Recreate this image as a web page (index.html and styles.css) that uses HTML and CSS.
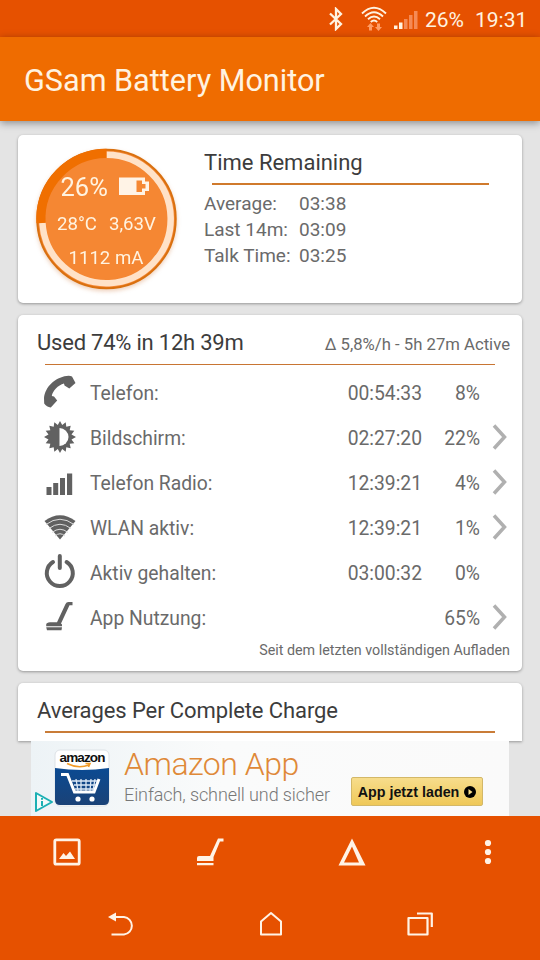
FILE: index.html
```html
<!DOCTYPE html>
<html lang="de">
<head>
  <meta charset="UTF-8" />
  <meta name="viewport" content="width=device-width, initial-scale=1.0"/>
  <title>GSam Battery Monitor</title>
  <link rel="stylesheet" href="styles.css">
</head>
<body>

<div class="status-bar">
  <svg class="bluetooth" width="14" height="24" viewBox="0 0 14 24">
    <path d="M1 6.500L12 17L7 22V2L12 7L1 17.500" fill="none" stroke="#fff3e0" stroke-width="2.300"/>
  </svg>
  <svg class="wifi" width="26" height="26" viewBox="0 0 26 26">
    <g fill="none" stroke="#fff3e0" stroke-width="1.900">
      <path d="M1 7.500Q13 -4 25 7.500"/>
      <path d="M4 10.500Q13 2 22 10.500"/>
      <path d="M7 13.300Q13 7.700 19 13.300"/>
      <path d="M9.800 16Q13 13 16.200 16"/>
    </g>
    <path d="M9.500 17L13 21H11V24.500H8V21H6ZM17.500 25L14 21H16V17.500H19V21H21Z" fill="#ff9d66"/>
  </svg>
  <svg class="signal" width="24" height="18" viewBox="0 0 24 18">
    <path d="M0 14.500H3.500V18H0ZM5 11.500H8.500V18H5Z" fill="#fff3e0"/>
    <path d="M10 8H13.500V18H10ZM15 4H18.500V18H15ZM20 0H23.500V18H20Z" fill="#f58a55"/>
  </svg>
  <span class="status-battery">26%</span>
  <span class="clock">19:31</span>
</div>

<header class="app-bar">
  <h1>GSam Battery Monitor</h1>
</header>

<main class="content">
  <section class="card summary">
    <svg class="gauge" width="146" height="146" viewBox="0 0 146 146">
      <circle cx="73.500" cy="73" r="69.200" fill="#f58733" stroke="#d9700f" stroke-width="2"/>
      <path d="M73.500 8.800A64.200 64.200 0 1 1 9.400 77" fill="none" stroke="#ffe2c8" stroke-width="6.500"/>
      <path d="M8 77A65.600 65.600 0 0 1 73.500 7.400" fill="none" stroke="#f06f00" stroke-width="9.200"/>
      <text class="gauge-level" x="27.500" y="49.500">26%</text>
      <path d="M86 31.500H112V35.500H116V45H112V49H86ZM103.500 34.500V46H109V42.500H112.500V38H109V34.500Z" fill="#fff3e6" fill-rule="evenodd"/>
      <text class="gauge-text" x="24" y="84">28°C</text>
      <text class="gauge-text" x="76" y="84">3,63V</text>
      <text class="gauge-text" x="35.500" y="117.500">1112 mA</text>
    </svg>
    <div class="remaining">
      <h2>Time Remaining</h2>
      <dl>
        <dt>Average:</dt><dd>03:38</dd>
        <dt>Last 14m:</dt><dd>03:09</dd>
        <dt>Talk Time:</dt><dd>03:25</dd>
      </dl>
    </div>
  </section>

  <section class="card usage">
    <div class="usage-head">
      <h2>Used 74% in 12h 39m</h2>
      <span class="rate">Δ 5,8%/h - 5h 27m Active</span>
    </div>
    <ul class="rows">
      <li>
        <svg class="icon" viewBox="0 0 36 36"><path d="M2 24C3 13 13 3.500 24.500 2Q28 1.500 30 2.500L33.500 9L27.300 14.500L22.500 11.500L22 9.500C16 11 10.500 17 9.800 22L12 22.500L15.200 26.500L8.800 33.500Q4.500 33 2.200 29.500Z"/></svg>
        <span class="name">Telefon:</span><span class="time">00:54:33</span><span class="percent">8%</span>
      </li>
      <li>
        <svg class="icon" viewBox="0 0 36 36">
          <path d="M18 2L20.200 6L23.700 3.200L24.300 7.700L28.700 6.700L27.700 11.200L32.300 11.800L29.500 15.400L34 18L29.500 20.600L32.300 24.200L27.700 24.800L28.700 29.300L24.300 28.300L23.700 32.800L20.200 30L18 34L15.800 30L12.300 32.800L11.700 28.300L7.300 29.300L8.300 24.800L3.700 24.200L6.500 20.600L2 18L6.500 15.400L3.700 11.800L8.300 11.200L7.300 6.700L11.700 7.700L12.300 3.200L15.800 6Z"/>
          <path class="cutout" d="M17.500 9A9 9 0 0 1 17.500 27Z"/>
        </svg>
        <span class="name">Bildschirm:</span><span class="time">02:27:20</span><span class="percent">22%</span>
        <svg class="chevron" viewBox="0 0 16 28"><path d="M2 2.500L12.500 14L2 25.500"/></svg>
      </li>
      <li>
        <svg class="icon" viewBox="0 0 36 36"><path d="M4.500 23H9.500V31H4.500ZM11.200 19H16.200V31H11.200ZM18 14H23V31H18ZM25 9.500H30.200V31H25Z"/></svg>
        <span class="name">Telefon Radio:</span><span class="time">12:39:21</span><span class="percent">4%</span>
        <svg class="chevron" viewBox="0 0 16 28"><path d="M2 2.500L12.500 14L2 25.500"/></svg>
      </li>
      <li>
        <svg class="icon" viewBox="0 0 36 36">
          <path d="M18 30.500L2.500 12Q18 .5 33.500 12Z"/>
          <g class="arcs"><path d="M4 15.500Q18 5 32 15.500"/><path d="M7 19.500Q18 11 29 19.500"/><path d="M10 23.500Q18 17 26 23.500"/><path d="M13 27Q18 22.500 23 27"/></g>
        </svg>
        <span class="name">WLAN aktiv:</span><span class="time">12:39:21</span><span class="percent">1%</span>
        <svg class="chevron" viewBox="0 0 16 28"><path d="M2 2.500L12.500 14L2 25.500"/></svg>
      </li>
      <li>
        <svg class="icon" viewBox="0 0 36 36"><path class="line" d="M17.800 2V14M11 8A13 13 0 1 0 24.600 8"/></svg>
        <span class="name">Aktiv gehalten:</span><span class="time">03:00:32</span><span class="percent">0%</span>
      </li>
      <li>
        <svg class="icon" viewBox="0 0 36 36">
          <path d="M4.200 25.500Q4.500 23.500 8 23.300H15L23.500 5Q24.300 3 26.500 3H30.500V6.300H27.500L19 24.500L20 25.500V27.200H4.200ZM4.200 28.200H20L19.500 31.200H5Z"/>
        </svg>
        <span class="name">App Nutzung:</span><span class="time"></span><span class="percent">65%</span>
        <svg class="chevron" viewBox="0 0 16 28"><path d="M2 2.500L12.500 14L2 25.500"/></svg>
      </li>
    </ul>
    <p class="since">Seit dem letzten vollständigen Aufladen</p>
  </section>

  <section class="card averages">
    <h2>Averages Per Complete Charge</h2>
  </section>

  <aside class="ad">
    <svg class="ad-choices" width="20" height="22" viewBox="0 0 20 22">
      <path d="M2 2L18 11L2 20Z" fill="#f4fafa" stroke="#1cb0b4" stroke-width="2" stroke-linejoin="round"/>
      <path d="M8 7V8.800M8 10V15" stroke="#1cb0b4" stroke-width="2"/>
    </svg>
    <svg class="ad-logo" width="56" height="58" viewBox="0 0 56 58">
      <defs>
        <linearGradient id="blue" x1="0" y1="0" x2="0" y2="1">
          <stop offset="0" stop-color="#0b4a92"/><stop offset="1" stop-color="#1a4277"/>
        </linearGradient>
      </defs>
      <rect x="1" y="1" width="54" height="56" rx="5" fill="#fff" stroke="#dde2e6"/>
      <path d="M1 19Q28 23 55 19V51Q55 56 50 56H6Q1 56 1 51Z" fill="url(#blue)"/>
      <text class="amazon" x="5.500" y="13" textLength="46">amazon</text>
      <path d="M13 14.500Q24 20 35 16M31.500 14.500L36 14.500L34.500 18" fill="none" stroke="#f29a26" stroke-width="1.600"/>
      <path d="M7 25.500H13.500L20.500 43H40L45 30" fill="none" stroke="#fff" stroke-width="3"/>
      <path d="M18 32H43M20 36H42M21 40H40M22 30L24 42M27 30V42M32 30V42M37 30L36 42M41 30L39 42" stroke="#dce8f5" stroke-width="1.300"/>
      <circle cx="24" cy="50" r="2.600" fill="#fff"/><circle cx="38" cy="50" r="2.600" fill="#fff"/>
    </svg>
    <div class="ad-text">
      <div class="ad-title">Amazon App</div>
      <div class="ad-sub">Einfach, schnell und sicher</div>
    </div>
    <div class="ad-button">
      <span>App jetzt laden</span>
      <svg width="12" height="12" viewBox="0 0 12 12"><circle cx="6" cy="6" r="6"/><path d="M4.500 3L8.500 6L4.500 9Z" fill="#fbe08a"/></svg>
    </div>
  </aside>
</main>

<footer class="bottom">
  <nav class="tools">
    <svg width="28" height="28" viewBox="0 0 28 28">
      <rect x="1.800" y="1.800" width="24.400" height="24.400" rx="1.500" fill="none" stroke="#fff3e6" stroke-width="2.800"/>
      <path d="M6 21L10.500 15L13 18L17 13.500L22 21Z" fill="#fff3e6"/>
    </svg>
    <svg width="28" height="28" viewBox="0 0 28 28">
      <path d="M1 23V20Q1 18 3 18H14L22 .5H27.500V3.500H24L17.500 19V23ZM1 25H17.500V27.300H1Z" fill="#fff3e6"/>
    </svg>
    <svg width="28" height="28" viewBox="0 0 28 28">
      <path d="M14 .5L27.500 27.500H.5ZM14 8.500L6 24.500H21Z" fill="#fff3e6" fill-rule="evenodd"/>
    </svg>
    <svg class="more" width="8" height="28" viewBox="0 0 8 28">
      <circle cx="4" cy="5" r="3.100" fill="#fff3e6"/><circle cx="4" cy="14" r="3.100" fill="#fff3e6"/><circle cx="4" cy="23" r="3.100" fill="#fff3e6"/>
    </svg>
  </nav>
  <nav class="system">
    <svg width="28" height="26" viewBox="0 0 28 26">
      <path d="M7 6H17A8.800 8.800 0 0 1 17 23.500H4.500" fill="none" stroke="#fff3e6" stroke-width="2"/>
      <path d="M1 6L9 1.500V10.500Z" fill="#fff3e6"/>
    </svg>
    <svg width="28" height="26" viewBox="0 0 28 26">
      <path d="M4 23.500V10.500L14 2L24 10.500V23.500Z" fill="none" stroke="#fff3e6" stroke-width="2" stroke-linejoin="round"/>
    </svg>
    <svg width="28" height="26" viewBox="0 0 28 26">
      <path d="M2.500 7H21.500V23.500H2.500ZM11 2.500H25.800V16" fill="none" stroke="#fff3e6" stroke-width="2.200" stroke-linejoin="round"/>
    </svg>
  </nav>
</footer>

</body>
</html>
```
FILE: styles.css
```css
* {
  box-sizing: border-box;
}

body {
  margin: 0;
  height: 960px;
  display: flex;
  flex-direction: column;
  overflow: hidden;
  font-family: Roboto, sans-serif;
  background: #e4e4e4;
  color: #6a6a6a;
}

h1, h2, p, ul, dl, dd {
  margin: 0;
  padding: 0;
  font-weight: 400;
}

svg {
  display: block;
  flex: none;
}

.status-bar {
  height: 37px;
  flex: none;
  display: flex;
  align-items: center;
  justify-content: flex-end;
  padding: 2px 13px 0 0;
  background: #e65100;
  color: #fff3e0;
  font-size: 21px;
}

.bluetooth {
  margin-top: -1px;
}

.wifi {
  margin: -2px 0 0 18px;
}

.signal {
  margin-left: 7px;
}

.status-battery {
  margin-left: 7px;
  width: 39px;
  white-space: nowrap;
}

.clock {
  margin-left: 11px;
  width: 52px;
  white-space: nowrap;
}

.app-bar {
  height: 84px;
  flex: none;
  display: flex;
  align-items: center;
  padding: 2px 24px 0;
  background: #ef6c00;
  box-shadow: 0 2px 8px rgba(0, 0, 0, 0.4);
}

h1 {
  font-size: 30.6px;
  color: #fff3e0;
}

.content {
  flex: 1;
  min-height: 0;
  padding: 14px 18px 0;
  display: flex;
  flex-direction: column;
  gap: 12px;
}

.card {
  flex: none;
  background: #fff;
  border-radius: 5px;
  box-shadow: 0 1px 3px rgba(0, 0, 0, 0.35);
}

h2 {
  font-size: 22px;
  line-height: 26px;
  color: #3c3c3c;
  white-space: nowrap;
}

.summary {
  height: 168px;
  display: flex;
  padding: 11px 0 0 15px;
}

.gauge {
  filter: drop-shadow(0 2px 2px rgba(200, 100, 30, 0.3));
}

.gauge text {
  fill: #fff3e0;
}

.gauge-level {
  font-size: 25.5px;
}

.gauge-text {
  font-size: 18.6px;
}

.remaining {
  margin: 4px 0 0 25px;
  width: 285px;
}

.remaining h2 {
  height: 33px;
}

.remaining h2::after {
  content: "";
  display: block;
  margin: 7px 0 0 8px;
  width: 277px;
  height: 2px;
  background: #d07a2c;
}

dl {
  display: grid;
  grid-template-columns: 95px 1fr;
  margin-top: 8px;
  font-size: 19px;
  line-height: 26px;
  white-space: nowrap;
}

.usage {
  height: 356px;
}

.usage-head {
  height: 50px;
  margin: 0 27px;
  display: flex;
  justify-content: space-between;
  border-bottom: 1px solid #c87533;
}

.usage-head h2 {
  margin: 15px 0 0 -8px;
  letter-spacing: -0.22px;
}

.rate {
  margin: 19px -15px 0 0;
  font-size: 16.7px;
  line-height: 21px;
  white-space: nowrap;
}

.rows {
  list-style: none;
  margin-top: 6px;
  font-size: 19.3px;
}

.rows li {
  height: 45px;
  display: grid;
  grid-template-columns: 36px 1fr 110px 58px 30px;
  align-items: center;
  padding: 0 12px 0 24px;
}

.icon {
  width: 36px;
  height: 36px;
  margin-top: -3px;
  fill: #616161;
}

.cutout {
  fill: #fff;
}

.arcs {
  fill: none;
  stroke: #ddd;
  stroke-width: 1;
}

.line {
  fill: none;
  stroke: #616161;
  stroke-width: 4;
  stroke-linecap: round;
}

.name {
  padding-left: 12px;
}

.time,
.percent {
  text-align: right;
}

.chevron {
  width: 16px;
  height: 28px;
  margin: -4px 0 0 12px;
  fill: none;
  stroke: #b0b0b0;
  stroke-width: 3.5;
}

.since {
  margin: 0 12px 0 0;
  font-size: 14.3px;
  line-height: 18px;
  text-align: right;
}

.averages {
  height: 58px;
  padding: 15px 27px 0;
  border-radius: 5px 5px 0 0;
}

.averages h2 {
  margin-left: -8px;
  letter-spacing: -0.1px;
}

.averages::after {
  content: "";
  display: block;
  margin-top: 7px;
  height: 2px;
  background: #c97c38;
}

.ad {
  flex: none;
  width: 478px;
  height: 75px;
  margin: -12px 0 0 13px;
  display: flex;
  background: linear-gradient(90deg, #edf3f6, #fafbfb 40%, #fafafa);
  position: relative;
  font-family: "Liberation Sans", sans-serif;
}

.ad-choices {
  margin: 50px 0 0 3px;
}

.ad-logo {
  margin: 8px 0 0 0;
}

.amazon {
  font-size: 13.5px;
  font-weight: 700;
  fill: #111;
}

.ad-text {
  margin: 4px 0 0 14px;
  width: 227px;
  font-family: Roboto, sans-serif;
  font-weight: 300;
  white-space: nowrap;
}

.ad-title {
  font-size: 32px;
  line-height: 38px;
  letter-spacing: -0.5px;
  color: #df8938;
}

.ad-sub {
  font-size: 18px;
  line-height: 23px;
  letter-spacing: -0.1px;
  color: #777;
}

.ad-button {
  width: 132px;
  height: 29px;
  margin-top: 36px;
  display: flex;
  align-items: center;
  justify-content: center;
  gap: 5px;
  border: 1px solid #d3b868;
  border-radius: 2px;
  background: linear-gradient(#f7dd8c, #efc858);
  color: #111;
  font-size: 14.3px;
  font-weight: 700;
  white-space: nowrap;
}

.bottom {
  height: 144px;
  flex: none;
  position: relative;
  background: #e65100;
}

.tools {
  height: 72px;
  display: flex;
  justify-content: space-between;
  align-items: center;
  padding: 0 48px 0 53px;
}

.more {
  margin-left: 3px;
}

.system {
  height: 72px;
  display: flex;
  justify-content: space-between;
  align-items: center;
  padding: 0 106px 0 107px;
}
```
